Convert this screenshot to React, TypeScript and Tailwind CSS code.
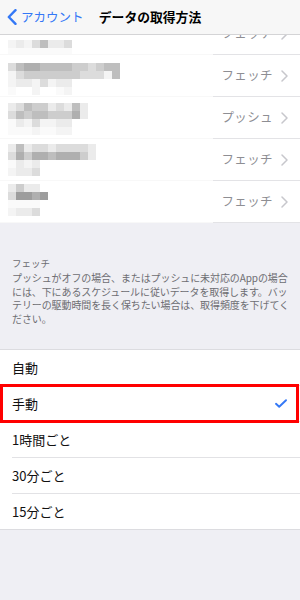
import React from "react";

const shade: Record<string, string> = {
  "0": "bg-transparent",
  a: "bg-[#fafafa]",
  "1": "bg-[#f4f4f4]",
  "2": "bg-[#ebebeb]",
  "3": "bg-[#dcdcdc]",
  "4": "bg-[#cdcdcd]",
  "5": "bg-[#bebebe]",
  "6": "bg-[#afafaf]",
  "7": "bg-[#9d9d9d]",
};

function Mosaic({ lines }: { lines: string[] }) {
  return (
    <div className="flex flex-col">
      {lines.map((line, i) => (
        <div key={i} className="flex h-[8px]">
          {line.split("").map((c, j) => (
            <div key={j} className={`w-[8px] h-[8px] ${shade[c]}`} />
          ))}
        </div>
      ))}
    </div>
  );
}

function Chevron() {
  return (
    <svg width="7" height="12" viewBox="0 0 7 12" className="shrink-0">
      <path d="M1 1 L6 6 L1 11" fill="none" stroke="#c7c7cc" strokeWidth="1.5" strokeLinecap="round" strokeLinejoin="round" />
    </svg>
  );
}

function Separator() {
  return (
    <div className="flex h-px">
      <div className="w-[213px] bg-[#f8f8f8]" />
      <div className="flex-1 bg-[#e3e3e6]" />
    </div>
  );
}

function AccountRow({ lines, pt, value }: { lines: string[]; pt: string; value: string }) {
  return (
    <>
      <div className="flex h-[41px] bg-white">
        <div className={`w-[213px] pl-[8px] ${pt}`}>
          <Mosaic lines={lines} />
        </div>
        <div className="flex-1 flex items-center justify-end gap-[8px] pr-[12px]">
          <span className="text-[12.5px] text-[#8e8e93] tracking-[0.4px]">{value}</span>
          <Chevron />
        </div>
      </div>
      <Separator />
    </>
  );
}

const options = ["自動", "手動", "1時間ごと", "30分ごと", "15分ごと"];

export default function App() {
  return (
    <div className="w-[300px] h-[600px] overflow-hidden bg-[#efeff4] font-['Noto_Sans_CJK_JP',sans-serif]">
      {/* Nav bar */}
      <header className="h-[35px] bg-[#f7f7f7] border-b border-[#d4d4d6] grid grid-cols-[1fr_auto_1fr] items-center">
        <div className="flex items-center pl-[7px] gap-[4px] text-[#3478f6]">
          <svg width="10" height="16" viewBox="0 0 10 16">
            <path d="M8.5 1.2 L1.8 8 L8.5 14.8" fill="none" stroke="#3478f6" strokeWidth="2.4" strokeLinecap="round" strokeLinejoin="round" />
          </svg>
          <span className="text-[12.5px] leading-none">アカウント</span>
        </div>
        <div className="text-[12.8px] font-bold text-black leading-none">データの取得方法</div>
        <div />
      </header>

      {/* Partially scrolled row */}
      <div className="h-[19px] overflow-hidden bg-white">
        <div className="flex h-[41px] mt-[-22px]">
          <div className="w-[213px] pl-[8px] pt-[27px]">
            <Mosaic lines={["12135223", "aaaaaaaa"]} />
          </div>
          <div className="flex-1 flex items-center justify-end gap-[8px] pr-[12px]">
            <span className="text-[12.5px] text-[#8e8e93] tracking-[0.4px]">フェッチ</span>
            <Chevron />
          </div>
        </div>
      </div>
      <Separator />

      <AccountRow pt="pt-[8px]" value="フェッチ" lines={["35665555443455", "13444444433315", "12213122", "a00100a1"]} />
      <AccountRow pt="pt-[6px]" value="プッシュ" lines={["2354423252", "3545544462", "a2131122", "aaa1aa11"]} />
      <AccountRow pt="pt-[5px]" value="フェッチ" lines={["25233233332", "36466566642", "a212", "1223"]} />
      <AccountRow pt="pt-[3px]" value="フェッチ" lines={["2422", "37767", "aaaa", "1223"]} />

      {/* Fetch explanation */}
      <div className="pt-[33px] pb-[24px] px-[12px] text-[#6d6d72]">
        <div className="text-[9.5px] leading-[14px] mb-[1px]">フェッチ</div>
        <div className="text-[10px] leading-[13.6px] whitespace-nowrap tracking-[-0.1px]">
          <div>プッシュがオフの場合、またはプッシュに未対応のAppの場合</div>
          <div>には、下にあるスケジュールに従いデータを取得します。バッ</div>
          <div>テリーの駆動時間を長く保ちたい場合は、取得頻度を下げてく</div>
          <div>ださい。</div>
        </div>
      </div>

      {/* Options */}
      <div className="bg-white border-t border-[#dcdce0] border-b">
        {options.map((opt, i) => (
          <div key={opt}>
            <div className="relative h-[35px] flex items-center px-[12px]">
              <span className="text-[13px] text-[#111]">{opt}</span>
              {i === 1 && (
                <>
                  <svg width="12" height="9" viewBox="0 0 12 9" className="ml-auto mr-[1px]">
                    <path d="M1 4.8 L4.2 7.8 L11 1.2" fill="none" stroke="#3478f6" strokeWidth="1.9" strokeLinecap="round" strokeLinejoin="round" />
                  </svg>
                  <div className="absolute left-0 right-[1px] top-[-2px] bottom-[-2px] border-[3px] border-[#ff0000]" />
                </>
              )}
            </div>
            {i < options.length - 1 && <div className="h-px bg-[#e2e2e5] ml-[12px]" />}
          </div>
        ))}
      </div>
    </div>
  );
}
